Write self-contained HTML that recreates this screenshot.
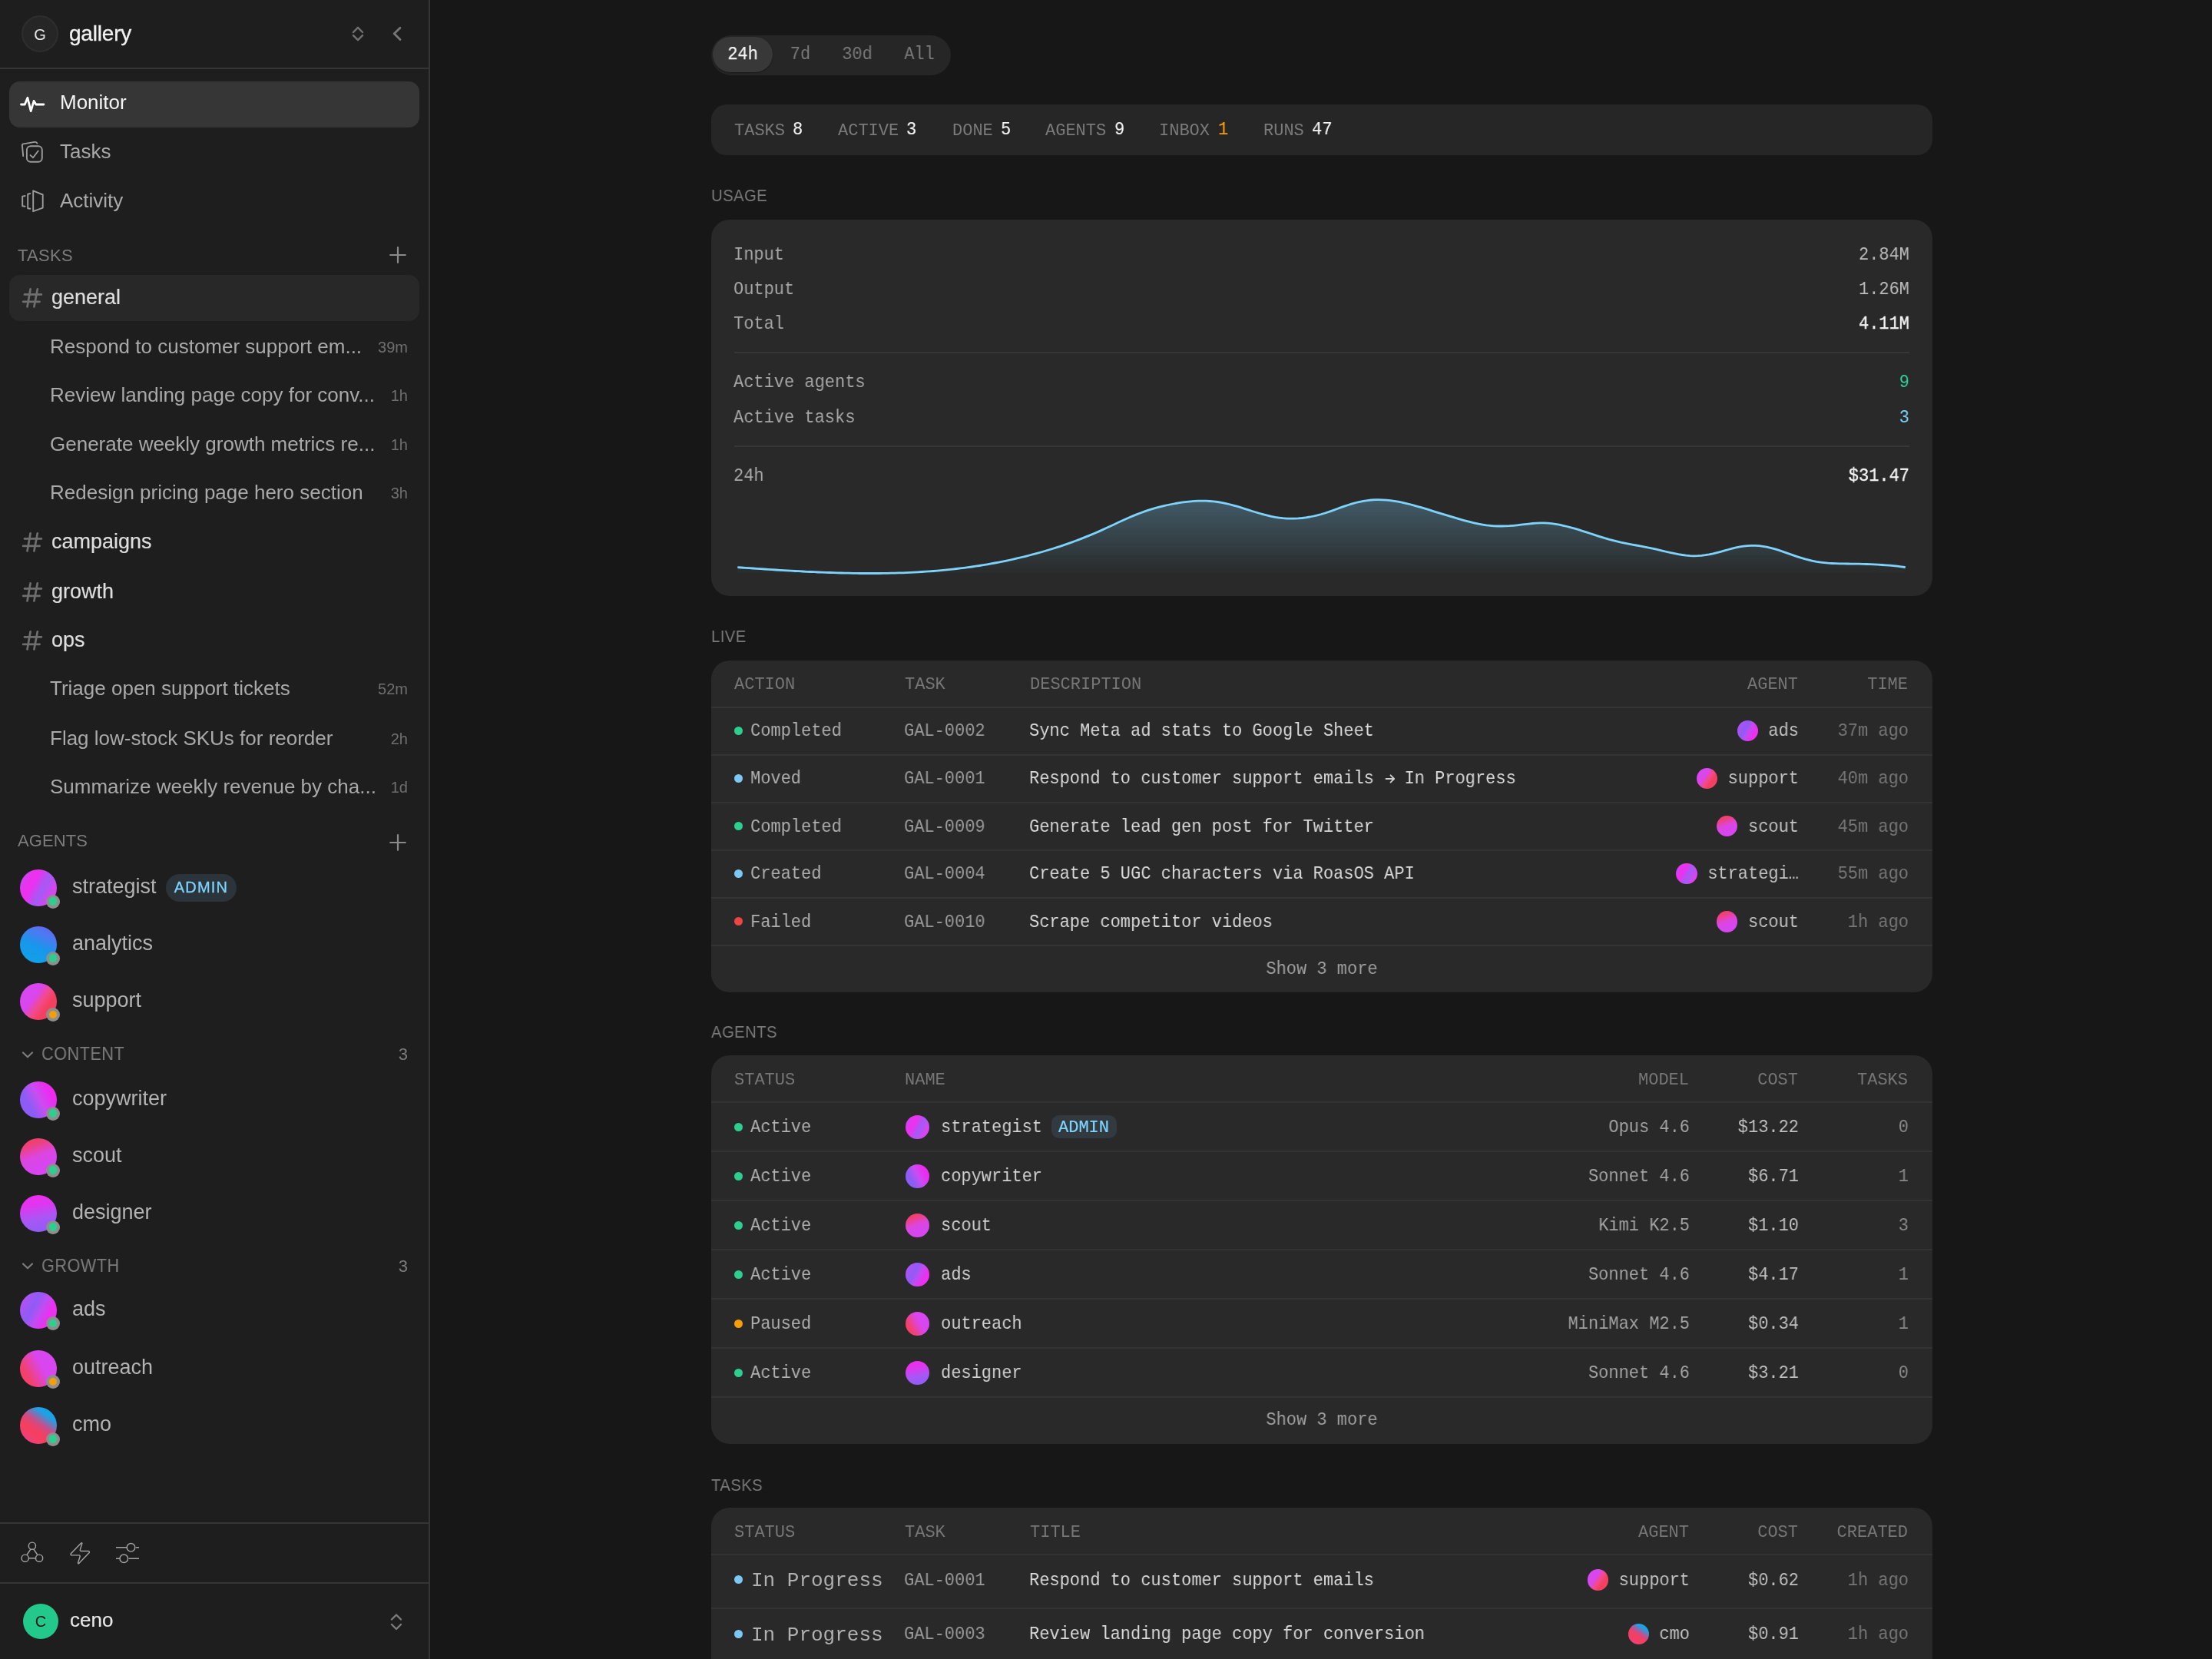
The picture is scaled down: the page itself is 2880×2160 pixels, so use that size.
<!DOCTYPE html><html><head><meta charset="utf-8"><title>Monitor</title><style>html,body{margin:0;padding:0;width:2880px;height:2160px;overflow:hidden;background:#171717}.t{position:absolute;line-height:40px;white-space:pre;will-change:transform}.b{position:absolute}</style></head><body>
<div class="b" style="left:0px;top:0px;width:558px;height:2160px;background:#1e1e1e;border-radius:0px;"></div>
<div class="b" style="left:558px;top:0px;width:2px;height:2160px;background:#353535;border-radius:0px;"></div>
<div class="b" style="left:0px;top:88px;width:558px;height:2px;background:#353535;border-radius:0px;"></div>
<div class="b" style="left:28px;top:20px;width:44px;height:44px;border-radius:50%;background:#262626;border:2px solid #2e2e2e"></div>
<div class="t" style="top:25px;font-family:'Liberation Sans', sans-serif;font-size:20px;color:#e6e6e6;left:-248px;width:600px;text-align:center;">G</div>
<div class="t" style="top:23.5px;font-family:'Liberation Sans', sans-serif;font-size:28px;color:#f2f2f2;left:90px;-webkit-text-stroke:0.3px #f2f2f2;letter-spacing:-0.2px;">gallery</div>
<svg class="b" style="left:452px;top:28px;" width="28" height="32" viewBox="0 0 28 32" fill="none"><path d="M8 14 L14 7.8 L20 14 M8 18.2 L14 24.2 L20 18.2" stroke="#707070" stroke-width="2.5" stroke-linecap="round" stroke-linejoin="round"/></svg>
<svg class="b" style="left:504px;top:28px;" width="28" height="32" viewBox="0 0 28 32" fill="none"><path d="M17 8.3 L9.2 15.7 L17 23.6" stroke="#777777" stroke-width="2.8" stroke-linecap="round" stroke-linejoin="round"/></svg>
<div class="b" style="left:12px;top:106px;width:534px;height:60px;background:#363636;border-radius:14px;"></div>
<svg class="b" style="left:20px;top:116px;" width="44" height="40" viewBox="0 0 44 40" fill="none"><path d="M7.5 20 L12.3 20 L15.9 11.3 L20.2 28.7 L24.1 15.4 L26.8 20 L36.9 20" stroke="#ffffff" stroke-width="2.8" stroke-linecap="round" stroke-linejoin="round"/></svg>
<div class="t" style="top:112.5px;font-family:'Liberation Sans', sans-serif;font-size:26px;color:#f4f4f4;left:78px;">Monitor</div>
<svg class="b" style="left:20px;top:176px;" width="44" height="44" viewBox="0 0 44 44" fill="none"><rect x="14.9" y="14.3" width="19.9" height="20.5" rx="5" stroke="#9c9c9c" stroke-width="1.9"/><path d="M19.5 26.1 L23.1 29.2 L29.7 20.5" stroke="#9c9c9c" stroke-width="1.9" stroke-linecap="round" stroke-linejoin="round"/><path d="M10.2 27.1 L8.9 13.5 Q8.7 11.7 10.5 11.4 L25 8.9 Q27.2 8.6 28.4 10.6" stroke="#9c9c9c" stroke-width="1.9" stroke-linecap="round" stroke-linejoin="round"/></svg>
<div class="t" style="top:177.3px;font-family:'Liberation Sans', sans-serif;font-size:26px;color:#a9a9a9;left:78px;">Tasks</div>
<svg class="b" style="left:20px;top:240px;" width="44" height="44" viewBox="0 0 44 44" fill="none"><path d="M12.6 15 L9.2 15.6 L9.2 28.2 L12.6 28.7" stroke="#9c9c9c" stroke-width="1.9" stroke-linecap="round" stroke-linejoin="round"/><path d="M19.3 12 L16.2 12.7 L16.2 31.2 L19.3 31.8" stroke="#9c9c9c" stroke-width="1.9" stroke-linecap="round" stroke-linejoin="round"/><path d="M23.2 8.3 L35.7 13.5 L35.7 30.6 L23.2 35.2 Z" stroke="#9c9c9c" stroke-width="1.9" stroke-linecap="round" stroke-linejoin="round"/></svg>
<div class="t" style="top:241.39999999999998px;font-family:'Liberation Sans', sans-serif;font-size:26px;color:#a9a9a9;left:78px;">Activity</div>
<div class="t" style="top:312.7px;font-family:'Liberation Sans', sans-serif;font-size:22px;color:#7c7c7c;letter-spacing:0.3px;left:23px;">TASKS</div>
<svg class="b" style="left:504px;top:318.3px;" width="28" height="28" viewBox="0 0 28 28" fill="none"><path d="M14 4.2 L14 23.8 M4.2 14 L23.8 14" stroke="#8a8a8a" stroke-width="2.2" stroke-linecap="round"/></svg>
<div class="b" style="left:12px;top:358px;width:534px;height:60px;background:#282828;border-radius:14px;"></div>
<svg class="b" style="left:28px;top:374.0px;" width="30" height="30" viewBox="0 0 30 30" fill="none"><path d="M11.6 2.4 L7.5 25.5 M20.8 2.4 L16.4 25.5 M4 9.4 L25.9 9.4 M2.1 18.8 L23.6 18.8" stroke="#6e6e6e" stroke-width="2.7" stroke-linecap="round"/></svg>
<div class="t" style="top:366.7px;font-family:'Liberation Sans', sans-serif;font-size:27px;color:#dedede;left:66.5px;-webkit-text-stroke:0.2px #dedede;">general</div>
<div class="t" style="top:431.0px;font-family:'Liberation Sans', sans-serif;font-size:26px;color:#a9a9a9;left:65px;">Respond to customer support em...</div>
<div class="t" style="top:432.0px;font-family:'Liberation Sans', sans-serif;font-size:20px;color:#6f6f6f;left:-169px;width:700px;text-align:right;">39m</div>
<div class="t" style="top:494.0px;font-family:'Liberation Sans', sans-serif;font-size:26px;color:#a9a9a9;left:65px;">Review landing page copy for conv...</div>
<div class="t" style="top:495.0px;font-family:'Liberation Sans', sans-serif;font-size:20px;color:#6f6f6f;left:-169px;width:700px;text-align:right;">1h</div>
<div class="t" style="top:557.5px;font-family:'Liberation Sans', sans-serif;font-size:26px;color:#a9a9a9;left:65px;">Generate weekly growth metrics re...</div>
<div class="t" style="top:558.5px;font-family:'Liberation Sans', sans-serif;font-size:20px;color:#6f6f6f;left:-169px;width:700px;text-align:right;">1h</div>
<div class="t" style="top:621.0px;font-family:'Liberation Sans', sans-serif;font-size:26px;color:#a9a9a9;left:65px;">Redesign pricing page hero section</div>
<div class="t" style="top:622.0px;font-family:'Liberation Sans', sans-serif;font-size:20px;color:#6f6f6f;left:-169px;width:700px;text-align:right;">3h</div>
<svg class="b" style="left:28px;top:692.0px;" width="30" height="30" viewBox="0 0 30 30" fill="none"><path d="M11.6 2.4 L7.5 25.5 M20.8 2.4 L16.4 25.5 M4 9.4 L25.9 9.4 M2.1 18.8 L23.6 18.8" stroke="#6e6e6e" stroke-width="2.7" stroke-linecap="round"/></svg>
<div class="t" style="top:685px;font-family:'Liberation Sans', sans-serif;font-size:27px;color:#dedede;left:66.5px;-webkit-text-stroke:0.2px #dedede;">campaigns</div>
<svg class="b" style="left:28px;top:756.5px;" width="30" height="30" viewBox="0 0 30 30" fill="none"><path d="M11.6 2.4 L7.5 25.5 M20.8 2.4 L16.4 25.5 M4 9.4 L25.9 9.4 M2.1 18.8 L23.6 18.8" stroke="#6e6e6e" stroke-width="2.7" stroke-linecap="round"/></svg>
<div class="t" style="top:749.5px;font-family:'Liberation Sans', sans-serif;font-size:27px;color:#dedede;left:66.5px;-webkit-text-stroke:0.2px #dedede;">growth</div>
<svg class="b" style="left:28px;top:820.0px;" width="30" height="30" viewBox="0 0 30 30" fill="none"><path d="M11.6 2.4 L7.5 25.5 M20.8 2.4 L16.4 25.5 M4 9.4 L25.9 9.4 M2.1 18.8 L23.6 18.8" stroke="#6e6e6e" stroke-width="2.7" stroke-linecap="round"/></svg>
<div class="t" style="top:813px;font-family:'Liberation Sans', sans-serif;font-size:27px;color:#dedede;left:66.5px;-webkit-text-stroke:0.2px #dedede;">ops</div>
<div class="t" style="top:876.0px;font-family:'Liberation Sans', sans-serif;font-size:26px;color:#a9a9a9;left:65px;">Triage open support tickets</div>
<div class="t" style="top:877.0px;font-family:'Liberation Sans', sans-serif;font-size:20px;color:#6f6f6f;left:-169px;width:700px;text-align:right;">52m</div>
<div class="t" style="top:940.5px;font-family:'Liberation Sans', sans-serif;font-size:26px;color:#a9a9a9;left:65px;">Flag low-stock SKUs for reorder</div>
<div class="t" style="top:941.5px;font-family:'Liberation Sans', sans-serif;font-size:20px;color:#6f6f6f;left:-169px;width:700px;text-align:right;">2h</div>
<div class="t" style="top:1004.0px;font-family:'Liberation Sans', sans-serif;font-size:26px;color:#a9a9a9;left:65px;">Summarize weekly revenue by cha...</div>
<div class="t" style="top:1005.0px;font-family:'Liberation Sans', sans-serif;font-size:20px;color:#6f6f6f;left:-169px;width:700px;text-align:right;">1d</div>
<div class="t" style="top:1075.2px;font-family:'Liberation Sans', sans-serif;font-size:22px;color:#7c7c7c;letter-spacing:0.1px;left:23px;">AGENTS</div>
<svg class="b" style="left:504px;top:1082.7px;" width="28" height="28" viewBox="0 0 28 28" fill="none"><path d="M14 4.2 L14 23.8 M4.2 14 L23.8 14" stroke="#8a8a8a" stroke-width="2.2" stroke-linecap="round"/></svg>
<div class="b" style="left:26.0px;top:1132.0px;width:48px;height:48px;border-radius:50%;background:linear-gradient(118deg,#b153f5 0%,#ee30f0 28%,#e833ef 38%,#a35bf6 58%,#d845ef 80%,#dc45ee 100%)"></div>
<div class="b" style="left:60px;top:1164.5px;width:18px;height:18px;border-radius:50%;background:#8e8e8e"></div>
<div class="b" style="left:63.75px;top:1168.25px;width:10.5px;height:10.5px;border-radius:50%;background:#2ccf8f"></div>
<div class="t" style="top:1134px;font-family:'Liberation Sans', sans-serif;font-size:27px;color:#b3b3b3;left:93.5px;">strategist</div>
<div class="b" style="left:216px;top:1138px;width:92px;height:36px;background:#2b343a;border-radius:18px;"></div>
<div class="t" style="top:1135.2px;font-family:'Liberation Sans', sans-serif;font-size:20px;color:#7dd3fc;letter-spacing:1.2px;left:-38px;width:600px;text-align:center;-webkit-text-stroke:0.3px #7dd3fc;">ADMIN</div>
<div class="b" style="left:26.0px;top:1206.0px;width:48px;height:48px;border-radius:50%;background:linear-gradient(205deg,#6a5cf5 0%,#4f78f2 25%,#1897ec 55%,#0ea5e6 100%)"></div>
<div class="b" style="left:60px;top:1238.5px;width:18px;height:18px;border-radius:50%;background:#8e8e8e"></div>
<div class="b" style="left:63.75px;top:1242.25px;width:10.5px;height:10.5px;border-radius:50%;background:#2ccf8f"></div>
<div class="t" style="top:1208px;font-family:'Liberation Sans', sans-serif;font-size:27px;color:#b3b3b3;left:93.5px;">analytics</div>
<div class="b" style="left:26.0px;top:1279.5px;width:48px;height:48px;border-radius:50%;background:linear-gradient(125deg,#d948ee 0%,#d946ef 38%,#f24a8a 55%,#f43f5e 70%,#f0436e 100%)"></div>
<div class="b" style="left:60px;top:1312.0px;width:18px;height:18px;border-radius:50%;background:#8e8e8e"></div>
<div class="b" style="left:63.75px;top:1315.75px;width:10.5px;height:10.5px;border-radius:50%;background:#f59e0b"></div>
<div class="t" style="top:1281.5px;font-family:'Liberation Sans', sans-serif;font-size:27px;color:#b3b3b3;left:93.5px;">support</div>
<svg class="b" style="left:24px;top:1363.5px;" width="24" height="20" viewBox="0 0 24 20" fill="none"><path d="M6 6.5 L12 12.3 L18 6.5" stroke="#7c7c7c" stroke-width="2.2" stroke-linecap="round" stroke-linejoin="round"/></svg>
<div class="t" style="top:1352.0px;font-family:'Liberation Sans', sans-serif;font-size:24px;color:#7c7c7c;letter-spacing:0.6px;left:54px;transform:scaleX(0.9);transform-origin:0 0;">CONTENT</div>
<div class="t" style="top:1353.0px;font-family:'Liberation Sans', sans-serif;font-size:22px;color:#7c7c7c;left:-169.5px;width:700px;text-align:right;">3</div>
<div class="b" style="left:26.0px;top:1408.0px;width:48px;height:48px;border-radius:50%;background:linear-gradient(62deg,#8b5cf6 0%,#8d5cf6 30%,#c94df2 52%,#ee2af0 78%,#f02cf0 100%)"></div>
<div class="b" style="left:60px;top:1440.5px;width:18px;height:18px;border-radius:50%;background:#8e8e8e"></div>
<div class="b" style="left:63.75px;top:1444.25px;width:10.5px;height:10.5px;border-radius:50%;background:#2ccf8f"></div>
<div class="t" style="top:1410px;font-family:'Liberation Sans', sans-serif;font-size:27px;color:#b3b3b3;left:93.5px;">copywriter</div>
<div class="b" style="left:26.0px;top:1482.0px;width:48px;height:48px;border-radius:50%;background:linear-gradient(160deg,#f4405e 0%,#f04075 20%,#dc46e0 48%,#d646ef 70%,#dc45ee 100%)"></div>
<div class="b" style="left:60px;top:1514.5px;width:18px;height:18px;border-radius:50%;background:#8e8e8e"></div>
<div class="b" style="left:63.75px;top:1518.25px;width:10.5px;height:10.5px;border-radius:50%;background:#2ccf8f"></div>
<div class="t" style="top:1484px;font-family:'Liberation Sans', sans-serif;font-size:27px;color:#b3b3b3;left:93.5px;">scout</div>
<div class="b" style="left:26.0px;top:1556.0px;width:48px;height:48px;border-radius:50%;background:linear-gradient(168deg,#f22af0 0%,#e036f0 30%,#a857f5 62%,#8b5cf6 100%)"></div>
<div class="b" style="left:60px;top:1588.5px;width:18px;height:18px;border-radius:50%;background:#8e8e8e"></div>
<div class="b" style="left:63.75px;top:1592.25px;width:10.5px;height:10.5px;border-radius:50%;background:#2ccf8f"></div>
<div class="t" style="top:1558px;font-family:'Liberation Sans', sans-serif;font-size:27px;color:#b3b3b3;left:93.5px;">designer</div>
<svg class="b" style="left:24px;top:1639px;" width="24" height="20" viewBox="0 0 24 20" fill="none"><path d="M6 6.5 L12 12.3 L18 6.5" stroke="#7c7c7c" stroke-width="2.2" stroke-linecap="round" stroke-linejoin="round"/></svg>
<div class="t" style="top:1627.5px;font-family:'Liberation Sans', sans-serif;font-size:24px;color:#7c7c7c;letter-spacing:0.6px;left:54px;transform:scaleX(0.9);transform-origin:0 0;">GROWTH</div>
<div class="t" style="top:1628.5px;font-family:'Liberation Sans', sans-serif;font-size:22px;color:#7c7c7c;left:-169.5px;width:700px;text-align:right;">3</div>
<div class="b" style="left:26.0px;top:1681.5px;width:48px;height:48px;border-radius:50%;background:linear-gradient(118deg,#c54bf3 0%,#8f5bf6 38%,#c14cf2 55%,#ee2ef0 75%,#e83af0 100%)"></div>
<div class="b" style="left:60px;top:1714.0px;width:18px;height:18px;border-radius:50%;background:#8e8e8e"></div>
<div class="b" style="left:63.75px;top:1717.75px;width:10.5px;height:10.5px;border-radius:50%;background:#2ccf8f"></div>
<div class="t" style="top:1683.5px;font-family:'Liberation Sans', sans-serif;font-size:27px;color:#b3b3b3;left:93.5px;">ads</div>
<div class="b" style="left:26.0px;top:1757.5px;width:48px;height:48px;border-radius:50%;background:linear-gradient(62deg,#f43f5e 0%,#f24170 25%,#d946ef 58%,#d646ef 100%)"></div>
<div class="b" style="left:60px;top:1790.0px;width:18px;height:18px;border-radius:50%;background:#8e8e8e"></div>
<div class="b" style="left:63.75px;top:1793.75px;width:10.5px;height:10.5px;border-radius:50%;background:#f59e0b"></div>
<div class="t" style="top:1759.5px;font-family:'Liberation Sans', sans-serif;font-size:27px;color:#b3b3b3;left:93.5px;">outreach</div>
<div class="b" style="left:26.0px;top:1832.0px;width:48px;height:48px;border-radius:50%;background:linear-gradient(215deg,#12a5e8 0%,#1ca2e6 24%,#d04a86 46%,#f43f5e 62%,#f43f6a 78%,#ea3ac0 100%)"></div>
<div class="b" style="left:60px;top:1864.5px;width:18px;height:18px;border-radius:50%;background:#8e8e8e"></div>
<div class="b" style="left:63.75px;top:1868.25px;width:10.5px;height:10.5px;border-radius:50%;background:#2ccf8f"></div>
<div class="t" style="top:1834px;font-family:'Liberation Sans', sans-serif;font-size:27px;color:#b3b3b3;left:93.5px;">cmo</div>
<div class="b" style="left:0px;top:1982px;width:558px;height:2px;background:#353535;border-radius:0px;"></div>
<svg class="b" style="left:24px;top:2000px;" width="36" height="40" viewBox="0 0 36 40" fill="none"><circle cx="17.9" cy="12.7" r="4.6" stroke="#a3a3a3" stroke-width="1.45"/><circle cx="8.7" cy="28.7" r="4.6" stroke="#a3a3a3" stroke-width="1.45"/><circle cx="27.1" cy="28.7" r="4.6" stroke="#a3a3a3" stroke-width="1.45"/><path d="M16 17 L10.8 24.6 M19.8 17 L25 24.6 M13.3 28.7 L22.5 28.7" stroke="#a3a3a3" stroke-width="1.45"/></svg>
<svg class="b" style="left:87.8px;top:2005.8px;" width="32.4" height="32.4" viewBox="0 0 24 24" fill="none"><path d="M4 14a1 1 0 0 1-.78-1.63l9.9-10.2a.5.5 0 0 1 .86.46l-1.92 6.02A1 1 0 0 0 13 10h7a1 1 0 0 1 .78 1.63l-9.9 10.2a.5.5 0 0 1-.86-.46l1.92-6.02A1 1 0 0 0 11 14z" stroke="#a3a3a3" stroke-width="1.05" stroke-linejoin="round"/></svg>
<svg class="b" style="left:146px;top:2000px;" width="40" height="40" viewBox="0 0 40 40" fill="none"><path d="M5 14.8 L19.6 14.8 M30.9 14.8 L35 14.8 M5 29.2 L10.4 29.2 M21.7 29.2 L35 29.2" stroke="#a3a3a3" stroke-width="1.45"/><circle cx="24.5" cy="14.8" r="5.3" stroke="#a3a3a3" stroke-width="1.45"/><circle cx="15.3" cy="29.2" r="5.3" stroke="#a3a3a3" stroke-width="1.45"/></svg>
<div class="b" style="left:0px;top:2060px;width:558px;height:2px;background:#353535;border-radius:0px;"></div>
<div class="b" style="left:30.0px;top:2088.0px;width:46px;height:46px;border-radius:50%;background:#22c98a"></div>
<div class="t" style="top:2091px;font-family:'Liberation Sans', sans-serif;font-size:20px;color:#111111;left:-247px;width:600px;text-align:center;">C</div>
<div class="t" style="top:2089px;font-family:'Liberation Sans', sans-serif;font-size:26px;color:#e8e8e8;left:90.5px;-webkit-text-stroke:0.15px #e8e8e8;">ceno</div>
<svg class="b" style="left:502px;top:2096px;" width="28" height="32" viewBox="0 0 28 32" fill="none"><path d="M8 12.5 L14 6.5 L20 12.5 M8 19 L14 25 L20 19" stroke="#7c7c7c" stroke-width="2.4" stroke-linecap="round" stroke-linejoin="round"/></svg>
<div class="b" style="left:926px;top:46px;width:312px;height:52px;background:#262626;border-radius:26px;"></div>
<div class="b" style="left:928px;top:48px;width:78px;height:46px;background:#383838;border-radius:23px;box-shadow:0 1px 2px rgba(0,0,0,.35);"></div>
<div class="t" style="top:51.2px;font-family:'Liberation Mono', monospace;font-size:24px;color:#f5f5f5;left:667px;width:600px;text-align:center;transform:scaleX(0.9167);transform-origin:center 0;-webkit-text-stroke:0.25px #f5f5f5;">24h</div>
<div class="t" style="top:51.2px;font-family:'Liberation Mono', monospace;font-size:24px;color:#7a7a7a;left:741.5px;width:600px;text-align:center;transform:scaleX(0.9167);transform-origin:center 0;">7d</div>
<div class="t" style="top:51.2px;font-family:'Liberation Mono', monospace;font-size:24px;color:#7a7a7a;left:816px;width:600px;text-align:center;transform:scaleX(0.9167);transform-origin:center 0;">30d</div>
<div class="t" style="top:51.2px;font-family:'Liberation Mono', monospace;font-size:24px;color:#7a7a7a;left:896.5px;width:600px;text-align:center;transform:scaleX(0.9167);transform-origin:center 0;">All</div>
<div class="b" style="left:926px;top:136px;width:1590px;height:66px;background:#262626;border-radius:20px;"></div>
<div class="t" style="top:151.2px;font-family:'Liberation Mono', monospace;font-size:22px;color:#7a7a7a;left:955.5px;">TASKS</div>
<div class="t" style="top:149.39999999999998px;font-family:'Liberation Mono', monospace;font-size:24px;color:#f5f5f5;left:1031.7px;transform:scaleX(0.9167);transform-origin:left 0;-webkit-text-stroke:0.15px #f5f5f5;">8</div>
<div class="t" style="top:151.2px;font-family:'Liberation Mono', monospace;font-size:22px;color:#7a7a7a;left:1090.8px;">ACTIVE</div>
<div class="t" style="top:149.39999999999998px;font-family:'Liberation Mono', monospace;font-size:24px;color:#f5f5f5;left:1180.2px;transform:scaleX(0.9167);transform-origin:left 0;-webkit-text-stroke:0.15px #f5f5f5;">3</div>
<div class="t" style="top:151.2px;font-family:'Liberation Mono', monospace;font-size:22px;color:#7a7a7a;left:1239.6px;">DONE</div>
<div class="t" style="top:149.39999999999998px;font-family:'Liberation Mono', monospace;font-size:24px;color:#f5f5f5;left:1302.6px;transform:scaleX(0.9167);transform-origin:left 0;-webkit-text-stroke:0.15px #f5f5f5;">5</div>
<div class="t" style="top:151.2px;font-family:'Liberation Mono', monospace;font-size:22px;color:#7a7a7a;left:1361.3px;">AGENTS</div>
<div class="t" style="top:149.39999999999998px;font-family:'Liberation Mono', monospace;font-size:24px;color:#f5f5f5;left:1450.7px;transform:scaleX(0.9167);transform-origin:left 0;-webkit-text-stroke:0.15px #f5f5f5;">9</div>
<div class="t" style="top:151.2px;font-family:'Liberation Mono', monospace;font-size:22px;color:#7a7a7a;left:1509.3px;">INBOX</div>
<div class="t" style="top:149.39999999999998px;font-family:'Liberation Mono', monospace;font-size:24px;color:#f59e0b;left:1585.5px;transform:scaleX(0.9167);transform-origin:left 0;-webkit-text-stroke:0.15px #f59e0b;">1</div>
<div class="t" style="top:151.2px;font-family:'Liberation Mono', monospace;font-size:22px;color:#7a7a7a;left:1645.1px;">RUNS</div>
<div class="t" style="top:149.39999999999998px;font-family:'Liberation Mono', monospace;font-size:24px;color:#f5f5f5;left:1708.1px;transform:scaleX(0.9167);transform-origin:left 0;-webkit-text-stroke:0.15px #f5f5f5;">47</div>
<div class="t" style="top:235px;font-family:'Liberation Sans', sans-serif;font-size:22px;color:#7a7a7a;letter-spacing:0.5px;left:926px;transform:scaleX(0.92);transform-origin:0 0;">USAGE</div>
<div class="b" style="left:926px;top:286px;width:1590px;height:490px;background:#292929;border-radius:24px;"></div>
<div class="t" style="top:311.9px;font-family:'Liberation Mono', monospace;font-size:24px;color:#a8a8a8;left:955px;transform:scaleX(0.9167);transform-origin:left 0;">Input</div>
<div class="t" style="top:311.9px;font-family:'Liberation Mono', monospace;font-size:24px;color:#bdbdbd;left:1786px;width:700px;text-align:right;transform:scaleX(0.9167);transform-origin:right 0;">2.84M</div>
<div class="t" style="top:356.7px;font-family:'Liberation Mono', monospace;font-size:24px;color:#a8a8a8;left:955px;transform:scaleX(0.9167);transform-origin:left 0;">Output</div>
<div class="t" style="top:356.7px;font-family:'Liberation Mono', monospace;font-size:24px;color:#bdbdbd;left:1786px;width:700px;text-align:right;transform:scaleX(0.9167);transform-origin:right 0;">1.26M</div>
<div class="t" style="top:401.59999999999997px;font-family:'Liberation Mono', monospace;font-size:24px;color:#a8a8a8;left:955px;transform:scaleX(0.9167);transform-origin:left 0;">Total</div>
<div class="t" style="top:401.59999999999997px;font-family:'Liberation Mono', monospace;font-size:24px;color:#f5f5f5;left:1786px;width:700px;text-align:right;transform:scaleX(0.9167);transform-origin:right 0;-webkit-text-stroke:0.35px #f5f5f5;">4.11M</div>
<div class="b" style="left:956px;top:457.5px;width:1530px;height:2px;background:#363636;border-radius:0px;"></div>
<div class="t" style="top:478.2px;font-family:'Liberation Mono', monospace;font-size:24px;color:#a8a8a8;left:955px;transform:scaleX(0.9167);transform-origin:left 0;">Active agents</div>
<div class="t" style="top:478.2px;font-family:'Liberation Mono', monospace;font-size:24px;color:#34d399;left:1786px;width:700px;text-align:right;transform:scaleX(0.9167);transform-origin:right 0;">9</div>
<div class="t" style="top:524.2px;font-family:'Liberation Mono', monospace;font-size:24px;color:#a8a8a8;left:955px;transform:scaleX(0.9167);transform-origin:left 0;">Active tasks</div>
<div class="t" style="top:524.2px;font-family:'Liberation Mono', monospace;font-size:24px;color:#7dd3fc;left:1786px;width:700px;text-align:right;transform:scaleX(0.9167);transform-origin:right 0;">3</div>
<div class="b" style="left:956px;top:579.5px;width:1530px;height:2px;background:#363636;border-radius:0px;"></div>
<div class="t" style="top:599.7px;font-family:'Liberation Mono', monospace;font-size:24px;color:#a8a8a8;left:955px;transform:scaleX(0.9167);transform-origin:left 0;">24h</div>
<div class="t" style="top:600.2px;font-family:'Liberation Mono', monospace;font-size:24px;color:#f5f5f5;left:1786px;width:700px;text-align:right;transform:scaleX(0.9167);transform-origin:right 0;-webkit-text-stroke:0.35px #f5f5f5;">$31.47</div>
<svg class="b" style="left:0px;top:0px;" width="2880" height="800" viewBox="0 0 2880 800" fill="none"><defs><linearGradient id="ag" x1="0" y1="648" x2="0" y2="750" gradientUnits="userSpaceOnUse"><stop offset="0" stop-color="#7dd3fc" stop-opacity="0.30"/><stop offset="0.55" stop-color="#7dd3fc" stop-opacity="0.14"/><stop offset="1" stop-color="#7dd3fc" stop-opacity="0"/></linearGradient></defs><path d="M960.3 738.7 L965.3 739.0 L970.3 739.4 L975.3 739.7 L980.3 740.0 L985.3 740.4 L990.3 740.7 L995.3 741.0 L1000.3 741.4 L1005.3 741.7 L1010.3 742.0 L1015.3 742.3 L1020.3 742.6 L1025.3 742.9 L1030.3 743.2 L1035.3 743.5 L1040.3 743.7 L1045.3 744.0 L1050.3 744.3 L1055.3 744.5 L1060.3 744.7 L1065.3 745.0 L1070.3 745.2 L1075.3 745.4 L1080.3 745.5 L1085.3 745.7 L1090.3 745.9 L1095.3 746.0 L1100.3 746.1 L1105.3 746.2 L1110.3 746.3 L1115.3 746.4 L1120.3 746.5 L1125.3 746.5 L1130.3 746.5 L1135.3 746.5 L1140.3 746.5 L1145.3 746.5 L1150.3 746.4 L1155.3 746.3 L1160.3 746.2 L1165.3 746.1 L1170.3 745.9 L1175.3 745.8 L1180.3 745.6 L1185.3 745.4 L1190.3 745.1 L1195.3 744.8 L1200.3 744.5 L1205.3 744.2 L1210.3 743.9 L1215.3 743.5 L1220.3 743.1 L1225.3 742.6 L1230.3 742.1 L1235.3 741.6 L1240.3 741.1 L1245.3 740.5 L1250.3 739.9 L1255.3 739.3 L1260.3 738.7 L1265.3 738.0 L1270.3 737.2 L1275.3 736.5 L1280.3 735.7 L1285.3 734.8 L1290.3 733.9 L1295.3 733.0 L1300.3 732.1 L1305.3 731.1 L1310.3 730.1 L1315.3 729.0 L1320.3 727.9 L1325.3 726.7 L1330.3 725.5 L1335.3 724.3 L1340.3 723.0 L1345.3 721.7 L1350.3 720.4 L1355.3 719.0 L1360.3 717.5 L1365.3 716.0 L1370.3 714.5 L1375.3 712.9 L1380.3 711.3 L1385.3 709.6 L1390.3 707.9 L1395.3 706.1 L1400.3 704.2 L1405.3 702.4 L1410.3 700.4 L1415.3 698.4 L1420.3 696.4 L1425.3 694.3 L1430.3 692.1 L1435.3 689.9 L1440.3 687.6 L1445.3 685.3 L1450.3 682.9 L1455.3 680.6 L1460.3 678.3 L1465.3 676.0 L1470.3 673.8 L1475.3 671.6 L1480.3 669.6 L1485.3 667.7 L1490.3 665.9 L1495.3 664.2 L1500.3 662.7 L1505.3 661.2 L1510.3 659.9 L1515.3 658.7 L1520.3 657.5 L1525.3 656.5 L1530.3 655.5 L1535.3 654.7 L1540.3 653.9 L1545.3 653.3 L1550.3 652.8 L1555.3 652.4 L1560.3 652.2 L1565.3 652.1 L1570.3 652.2 L1575.3 652.5 L1580.3 652.9 L1585.3 653.5 L1590.3 654.3 L1595.3 655.3 L1600.3 656.5 L1605.3 657.8 L1610.3 659.2 L1615.3 660.7 L1620.3 662.3 L1625.3 663.9 L1630.3 665.5 L1635.3 667.0 L1640.3 668.5 L1645.3 669.9 L1650.3 671.2 L1655.3 672.4 L1660.3 673.4 L1665.3 674.1 L1670.3 674.7 L1675.3 675.1 L1680.3 675.2 L1685.3 675.1 L1690.3 674.9 L1695.3 674.5 L1700.3 673.8 L1705.3 673.0 L1710.3 672.0 L1715.3 670.8 L1720.3 669.5 L1725.3 668.0 L1730.3 666.3 L1735.3 664.6 L1740.3 662.8 L1745.3 660.9 L1750.3 659.2 L1755.3 657.5 L1760.3 655.9 L1765.3 654.5 L1770.3 653.3 L1775.3 652.3 L1780.3 651.6 L1785.3 651.0 L1790.3 650.7 L1795.3 650.6 L1800.3 650.8 L1805.3 651.1 L1810.3 651.6 L1815.3 652.3 L1820.3 653.2 L1825.3 654.2 L1830.3 655.3 L1835.3 656.5 L1840.3 657.9 L1845.3 659.3 L1850.3 660.7 L1855.3 662.2 L1860.3 663.7 L1865.3 665.3 L1870.3 666.8 L1875.3 668.4 L1880.3 669.9 L1885.3 671.4 L1890.3 672.9 L1895.3 674.4 L1900.3 675.9 L1905.3 677.3 L1910.3 678.6 L1915.3 679.9 L1920.3 681.1 L1925.3 682.2 L1930.3 683.1 L1935.3 683.9 L1940.3 684.4 L1945.3 684.8 L1950.3 685.0 L1955.3 685.0 L1960.3 684.9 L1965.3 684.7 L1970.3 684.3 L1975.3 683.8 L1980.3 683.2 L1985.3 682.6 L1990.3 682.1 L1995.3 681.5 L2000.3 681.2 L2005.3 680.9 L2010.3 680.9 L2015.3 681.2 L2020.3 681.7 L2025.3 682.4 L2030.3 683.2 L2035.3 684.3 L2040.3 685.5 L2045.3 686.8 L2050.3 688.2 L2055.3 689.7 L2060.3 691.3 L2065.3 692.9 L2070.3 694.5 L2075.3 696.2 L2080.3 697.8 L2085.3 699.4 L2090.3 700.9 L2095.3 702.4 L2100.3 703.7 L2105.3 704.9 L2110.3 706.1 L2115.3 707.1 L2120.3 708.1 L2125.3 709.1 L2130.3 710.0 L2135.3 710.9 L2140.3 711.8 L2145.3 712.8 L2150.3 713.8 L2155.3 714.9 L2160.3 716.1 L2165.3 717.3 L2170.3 718.5 L2175.3 719.6 L2180.3 720.7 L2185.3 721.7 L2190.3 722.5 L2195.3 723.2 L2200.3 723.6 L2205.3 723.8 L2210.3 723.7 L2215.3 723.3 L2220.3 722.7 L2225.3 721.9 L2230.3 720.9 L2235.3 719.6 L2240.3 718.3 L2245.3 716.9 L2250.3 715.5 L2255.3 714.1 L2260.3 712.9 L2265.3 711.9 L2270.3 711.2 L2275.3 710.7 L2280.3 710.4 L2285.3 710.4 L2290.3 710.7 L2295.3 711.3 L2300.3 712.1 L2305.3 713.3 L2310.3 714.6 L2315.3 716.2 L2320.3 717.9 L2325.3 719.6 L2330.3 721.4 L2335.3 723.1 L2340.3 724.8 L2345.3 726.4 L2350.3 727.9 L2355.3 729.2 L2360.3 730.4 L2365.3 731.4 L2370.3 732.1 L2375.3 732.7 L2380.3 733.2 L2385.3 733.5 L2390.3 733.7 L2395.3 733.8 L2400.3 733.9 L2405.3 734.0 L2410.3 734.1 L2415.3 734.1 L2420.3 734.2 L2425.3 734.4 L2430.3 734.5 L2435.3 734.7 L2440.3 734.9 L2445.3 735.2 L2450.3 735.5 L2455.3 735.8 L2460.3 736.2 L2465.3 736.7 L2470.3 737.2 L2475.3 737.8 L2480.3 738.5 L2480.8 738.5 L2480.8 750 L960.3 750 Z" fill="url(#ag)"/><path d="M960.3 738.7 L965.3 739.0 L970.3 739.4 L975.3 739.7 L980.3 740.0 L985.3 740.4 L990.3 740.7 L995.3 741.0 L1000.3 741.4 L1005.3 741.7 L1010.3 742.0 L1015.3 742.3 L1020.3 742.6 L1025.3 742.9 L1030.3 743.2 L1035.3 743.5 L1040.3 743.7 L1045.3 744.0 L1050.3 744.3 L1055.3 744.5 L1060.3 744.7 L1065.3 745.0 L1070.3 745.2 L1075.3 745.4 L1080.3 745.5 L1085.3 745.7 L1090.3 745.9 L1095.3 746.0 L1100.3 746.1 L1105.3 746.2 L1110.3 746.3 L1115.3 746.4 L1120.3 746.5 L1125.3 746.5 L1130.3 746.5 L1135.3 746.5 L1140.3 746.5 L1145.3 746.5 L1150.3 746.4 L1155.3 746.3 L1160.3 746.2 L1165.3 746.1 L1170.3 745.9 L1175.3 745.8 L1180.3 745.6 L1185.3 745.4 L1190.3 745.1 L1195.3 744.8 L1200.3 744.5 L1205.3 744.2 L1210.3 743.9 L1215.3 743.5 L1220.3 743.1 L1225.3 742.6 L1230.3 742.1 L1235.3 741.6 L1240.3 741.1 L1245.3 740.5 L1250.3 739.9 L1255.3 739.3 L1260.3 738.7 L1265.3 738.0 L1270.3 737.2 L1275.3 736.5 L1280.3 735.7 L1285.3 734.8 L1290.3 733.9 L1295.3 733.0 L1300.3 732.1 L1305.3 731.1 L1310.3 730.1 L1315.3 729.0 L1320.3 727.9 L1325.3 726.7 L1330.3 725.5 L1335.3 724.3 L1340.3 723.0 L1345.3 721.7 L1350.3 720.4 L1355.3 719.0 L1360.3 717.5 L1365.3 716.0 L1370.3 714.5 L1375.3 712.9 L1380.3 711.3 L1385.3 709.6 L1390.3 707.9 L1395.3 706.1 L1400.3 704.2 L1405.3 702.4 L1410.3 700.4 L1415.3 698.4 L1420.3 696.4 L1425.3 694.3 L1430.3 692.1 L1435.3 689.9 L1440.3 687.6 L1445.3 685.3 L1450.3 682.9 L1455.3 680.6 L1460.3 678.3 L1465.3 676.0 L1470.3 673.8 L1475.3 671.6 L1480.3 669.6 L1485.3 667.7 L1490.3 665.9 L1495.3 664.2 L1500.3 662.7 L1505.3 661.2 L1510.3 659.9 L1515.3 658.7 L1520.3 657.5 L1525.3 656.5 L1530.3 655.5 L1535.3 654.7 L1540.3 653.9 L1545.3 653.3 L1550.3 652.8 L1555.3 652.4 L1560.3 652.2 L1565.3 652.1 L1570.3 652.2 L1575.3 652.5 L1580.3 652.9 L1585.3 653.5 L1590.3 654.3 L1595.3 655.3 L1600.3 656.5 L1605.3 657.8 L1610.3 659.2 L1615.3 660.7 L1620.3 662.3 L1625.3 663.9 L1630.3 665.5 L1635.3 667.0 L1640.3 668.5 L1645.3 669.9 L1650.3 671.2 L1655.3 672.4 L1660.3 673.4 L1665.3 674.1 L1670.3 674.7 L1675.3 675.1 L1680.3 675.2 L1685.3 675.1 L1690.3 674.9 L1695.3 674.5 L1700.3 673.8 L1705.3 673.0 L1710.3 672.0 L1715.3 670.8 L1720.3 669.5 L1725.3 668.0 L1730.3 666.3 L1735.3 664.6 L1740.3 662.8 L1745.3 660.9 L1750.3 659.2 L1755.3 657.5 L1760.3 655.9 L1765.3 654.5 L1770.3 653.3 L1775.3 652.3 L1780.3 651.6 L1785.3 651.0 L1790.3 650.7 L1795.3 650.6 L1800.3 650.8 L1805.3 651.1 L1810.3 651.6 L1815.3 652.3 L1820.3 653.2 L1825.3 654.2 L1830.3 655.3 L1835.3 656.5 L1840.3 657.9 L1845.3 659.3 L1850.3 660.7 L1855.3 662.2 L1860.3 663.7 L1865.3 665.3 L1870.3 666.8 L1875.3 668.4 L1880.3 669.9 L1885.3 671.4 L1890.3 672.9 L1895.3 674.4 L1900.3 675.9 L1905.3 677.3 L1910.3 678.6 L1915.3 679.9 L1920.3 681.1 L1925.3 682.2 L1930.3 683.1 L1935.3 683.9 L1940.3 684.4 L1945.3 684.8 L1950.3 685.0 L1955.3 685.0 L1960.3 684.9 L1965.3 684.7 L1970.3 684.3 L1975.3 683.8 L1980.3 683.2 L1985.3 682.6 L1990.3 682.1 L1995.3 681.5 L2000.3 681.2 L2005.3 680.9 L2010.3 680.9 L2015.3 681.2 L2020.3 681.7 L2025.3 682.4 L2030.3 683.2 L2035.3 684.3 L2040.3 685.5 L2045.3 686.8 L2050.3 688.2 L2055.3 689.7 L2060.3 691.3 L2065.3 692.9 L2070.3 694.5 L2075.3 696.2 L2080.3 697.8 L2085.3 699.4 L2090.3 700.9 L2095.3 702.4 L2100.3 703.7 L2105.3 704.9 L2110.3 706.1 L2115.3 707.1 L2120.3 708.1 L2125.3 709.1 L2130.3 710.0 L2135.3 710.9 L2140.3 711.8 L2145.3 712.8 L2150.3 713.8 L2155.3 714.9 L2160.3 716.1 L2165.3 717.3 L2170.3 718.5 L2175.3 719.6 L2180.3 720.7 L2185.3 721.7 L2190.3 722.5 L2195.3 723.2 L2200.3 723.6 L2205.3 723.8 L2210.3 723.7 L2215.3 723.3 L2220.3 722.7 L2225.3 721.9 L2230.3 720.9 L2235.3 719.6 L2240.3 718.3 L2245.3 716.9 L2250.3 715.5 L2255.3 714.1 L2260.3 712.9 L2265.3 711.9 L2270.3 711.2 L2275.3 710.7 L2280.3 710.4 L2285.3 710.4 L2290.3 710.7 L2295.3 711.3 L2300.3 712.1 L2305.3 713.3 L2310.3 714.6 L2315.3 716.2 L2320.3 717.9 L2325.3 719.6 L2330.3 721.4 L2335.3 723.1 L2340.3 724.8 L2345.3 726.4 L2350.3 727.9 L2355.3 729.2 L2360.3 730.4 L2365.3 731.4 L2370.3 732.1 L2375.3 732.7 L2380.3 733.2 L2385.3 733.5 L2390.3 733.7 L2395.3 733.8 L2400.3 733.9 L2405.3 734.0 L2410.3 734.1 L2415.3 734.1 L2420.3 734.2 L2425.3 734.4 L2430.3 734.5 L2435.3 734.7 L2440.3 734.9 L2445.3 735.2 L2450.3 735.5 L2455.3 735.8 L2460.3 736.2 L2465.3 736.7 L2470.3 737.2 L2475.3 737.8 L2480.3 738.5 L2480.8 738.5" stroke="#7dd3fc" stroke-width="2.8" fill="none" stroke-linecap="butt" stroke-linejoin="round"/></svg>
<div class="t" style="top:809.2px;font-family:'Liberation Sans', sans-serif;font-size:22px;color:#7a7a7a;letter-spacing:0.5px;left:926px;transform:scaleX(0.92);transform-origin:0 0;">LIVE</div>
<div class="b" style="left:926px;top:860px;width:1590px;height:432px;background:#292929;border-radius:24px;"></div>
<div class="t" style="top:872px;font-family:'Liberation Mono', monospace;font-size:22px;color:#767676;left:956px;">ACTION</div>
<div class="t" style="top:872px;font-family:'Liberation Mono', monospace;font-size:22px;color:#767676;left:1178px;">TASK</div>
<div class="t" style="top:872px;font-family:'Liberation Mono', monospace;font-size:22px;color:#767676;left:1340.5px;">DESCRIPTION</div>
<div class="t" style="top:872px;font-family:'Liberation Mono', monospace;font-size:22px;color:#767676;left:1641px;width:700px;text-align:right;">AGENT</div>
<div class="t" style="top:872px;font-family:'Liberation Mono', monospace;font-size:22px;color:#767676;left:1784px;width:700px;text-align:right;">TIME</div>
<div class="b" style="left:926px;top:919.5px;width:1590px;height:2px;background:#333333;border-radius:0px;"></div>
<div class="b" style="left:926px;top:981.6px;width:1590px;height:2px;background:#333333;border-radius:0px;"></div>
<div class="b" style="left:926px;top:1043.8px;width:1590px;height:2px;background:#333333;border-radius:0px;"></div>
<div class="b" style="left:926px;top:1105.7px;width:1590px;height:2px;background:#333333;border-radius:0px;"></div>
<div class="b" style="left:926px;top:1167.9px;width:1590px;height:2px;background:#333333;border-radius:0px;"></div>
<div class="b" style="left:926px;top:1229.7px;width:1590px;height:2px;background:#333333;border-radius:0px;"></div>
<div class="b" style="left:955.5px;top:946.0px;width:11px;height:11px;border-radius:50%;background:#2ccf8f"></div>
<div class="t" style="top:932.2px;font-family:'Liberation Mono', monospace;font-size:24px;color:#b0b0b0;left:977px;transform:scaleX(0.9167);transform-origin:left 0;">Completed</div>
<div class="t" style="top:932.2px;font-family:'Liberation Mono', monospace;font-size:24px;color:#9a9a9a;left:1177px;transform:scaleX(0.9167);transform-origin:left 0;">GAL-0002</div>
<div class="t" style="top:932.2px;font-family:'Liberation Mono', monospace;font-size:24px;color:#dadada;left:1339.5px;transform:scaleX(0.9167);transform-origin:left 0;">Sync Meta ad stats to Google Sheet</div>
<div class="t" style="top:932.2px;font-family:'Liberation Mono', monospace;font-size:24px;color:#c4c4c4;left:1642px;width:700px;text-align:right;transform:scaleX(0.9167);transform-origin:right 0;">ads</div>
<div class="b" style="left:2261.5000000000005px;top:937.8px;width:27.4px;height:27.4px;border-radius:50%;background:linear-gradient(118deg,#c54bf3 0%,#8f5bf6 38%,#c14cf2 55%,#ee2ef0 75%,#e83af0 100%)"></div>
<div class="t" style="top:932.2px;font-family:'Liberation Mono', monospace;font-size:24px;color:#777777;left:1785px;width:700px;text-align:right;transform:scaleX(0.9167);transform-origin:right 0;">37m ago</div>
<div class="b" style="left:955.5px;top:1008.1px;width:11px;height:11px;border-radius:50%;background:#7cc8f5"></div>
<div class="t" style="top:994.3000000000001px;font-family:'Liberation Mono', monospace;font-size:24px;color:#b0b0b0;left:977px;transform:scaleX(0.9167);transform-origin:left 0;">Moved</div>
<div class="t" style="top:994.3000000000001px;font-family:'Liberation Mono', monospace;font-size:24px;color:#9a9a9a;left:1177px;transform:scaleX(0.9167);transform-origin:left 0;">GAL-0001</div>
<div class="t" style="top:994.3000000000001px;font-family:'Liberation Mono', monospace;font-size:24px;color:#dadada;left:1339.5px;transform:scaleX(0.9167);transform-origin:left 0;">Respond to customer support emails   In Progress</div>
<svg class="b" style="left:1802.5px;top:1003.1px;" width="14" height="20" viewBox="0 0 14 20" fill="none"><path d="M1.5 11 L12 11 M7.5 6.3 L12.2 11 L7.5 15.7" stroke="#d0d0d0" stroke-width="1.8" stroke-linecap="round" stroke-linejoin="round"/></svg>
<div class="t" style="top:994.3000000000001px;font-family:'Liberation Mono', monospace;font-size:24px;color:#c4c4c4;left:1642px;width:700px;text-align:right;transform:scaleX(0.9167);transform-origin:right 0;">support</div>
<div class="b" style="left:2208.7000000000003px;top:999.9px;width:27.4px;height:27.4px;border-radius:50%;background:linear-gradient(125deg,#d948ee 0%,#d946ef 38%,#f24a8a 55%,#f43f5e 70%,#f0436e 100%)"></div>
<div class="t" style="top:994.3000000000001px;font-family:'Liberation Mono', monospace;font-size:24px;color:#777777;left:1785px;width:700px;text-align:right;transform:scaleX(0.9167);transform-origin:right 0;">40m ago</div>
<div class="b" style="left:955.5px;top:1070.3px;width:11px;height:11px;border-radius:50%;background:#2ccf8f"></div>
<div class="t" style="top:1056.5px;font-family:'Liberation Mono', monospace;font-size:24px;color:#b0b0b0;left:977px;transform:scaleX(0.9167);transform-origin:left 0;">Completed</div>
<div class="t" style="top:1056.5px;font-family:'Liberation Mono', monospace;font-size:24px;color:#9a9a9a;left:1177px;transform:scaleX(0.9167);transform-origin:left 0;">GAL-0009</div>
<div class="t" style="top:1056.5px;font-family:'Liberation Mono', monospace;font-size:24px;color:#dadada;left:1339.5px;transform:scaleX(0.9167);transform-origin:left 0;">Generate lead gen post for Twitter</div>
<div class="t" style="top:1056.5px;font-family:'Liberation Mono', monospace;font-size:24px;color:#c4c4c4;left:1642px;width:700px;text-align:right;transform:scaleX(0.9167);transform-origin:right 0;">scout</div>
<div class="b" style="left:2235.1000000000004px;top:1062.1px;width:27.4px;height:27.4px;border-radius:50%;background:linear-gradient(160deg,#f4405e 0%,#f04075 20%,#dc46e0 48%,#d646ef 70%,#dc45ee 100%)"></div>
<div class="t" style="top:1056.5px;font-family:'Liberation Mono', monospace;font-size:24px;color:#777777;left:1785px;width:700px;text-align:right;transform:scaleX(0.9167);transform-origin:right 0;">45m ago</div>
<div class="b" style="left:955.5px;top:1132.2px;width:11px;height:11px;border-radius:50%;background:#7cc8f5"></div>
<div class="t" style="top:1118.4px;font-family:'Liberation Mono', monospace;font-size:24px;color:#b0b0b0;left:977px;transform:scaleX(0.9167);transform-origin:left 0;">Created</div>
<div class="t" style="top:1118.4px;font-family:'Liberation Mono', monospace;font-size:24px;color:#9a9a9a;left:1177px;transform:scaleX(0.9167);transform-origin:left 0;">GAL-0004</div>
<div class="t" style="top:1118.4px;font-family:'Liberation Mono', monospace;font-size:24px;color:#dadada;left:1339.5px;transform:scaleX(0.9167);transform-origin:left 0;">Create 5 UGC characters via RoasOS API</div>
<div class="t" style="top:1118.4px;font-family:'Liberation Mono', monospace;font-size:24px;color:#c4c4c4;left:1642px;width:700px;text-align:right;transform:scaleX(0.9167);transform-origin:right 0;">strategi…</div>
<div class="b" style="left:2182.3px;top:1124.0px;width:27.4px;height:27.4px;border-radius:50%;background:linear-gradient(118deg,#b153f5 0%,#ee30f0 28%,#e833ef 38%,#a35bf6 58%,#d845ef 80%,#dc45ee 100%)"></div>
<div class="t" style="top:1118.4px;font-family:'Liberation Mono', monospace;font-size:24px;color:#777777;left:1785px;width:700px;text-align:right;transform:scaleX(0.9167);transform-origin:right 0;">55m ago</div>
<div class="b" style="left:955.5px;top:1194.4px;width:11px;height:11px;border-radius:50%;background:#ef4444"></div>
<div class="t" style="top:1180.6000000000001px;font-family:'Liberation Mono', monospace;font-size:24px;color:#b0b0b0;left:977px;transform:scaleX(0.9167);transform-origin:left 0;">Failed</div>
<div class="t" style="top:1180.6000000000001px;font-family:'Liberation Mono', monospace;font-size:24px;color:#9a9a9a;left:1177px;transform:scaleX(0.9167);transform-origin:left 0;">GAL-0010</div>
<div class="t" style="top:1180.6000000000001px;font-family:'Liberation Mono', monospace;font-size:24px;color:#dadada;left:1339.5px;transform:scaleX(0.9167);transform-origin:left 0;">Scrape competitor videos</div>
<div class="t" style="top:1180.6000000000001px;font-family:'Liberation Mono', monospace;font-size:24px;color:#c4c4c4;left:1642px;width:700px;text-align:right;transform:scaleX(0.9167);transform-origin:right 0;">scout</div>
<div class="b" style="left:2235.1000000000004px;top:1186.2px;width:27.4px;height:27.4px;border-radius:50%;background:linear-gradient(160deg,#f4405e 0%,#f04075 20%,#dc46e0 48%,#d646ef 70%,#dc45ee 100%)"></div>
<div class="t" style="top:1180.6000000000001px;font-family:'Liberation Mono', monospace;font-size:24px;color:#777777;left:1785px;width:700px;text-align:right;transform:scaleX(0.9167);transform-origin:right 0;">1h ago</div>
<div class="t" style="top:1241.7px;font-family:'Liberation Mono', monospace;font-size:24px;color:#a0a0a0;left:1421px;width:600px;text-align:center;transform:scaleX(0.9167);transform-origin:center 0;">Show 3 more</div>
<div class="t" style="top:1323.7px;font-family:'Liberation Sans', sans-serif;font-size:22px;color:#7a7a7a;letter-spacing:0.5px;left:926px;transform:scaleX(0.92);transform-origin:0 0;">AGENTS</div>
<div class="b" style="left:926px;top:1374px;width:1590px;height:506px;background:#292929;border-radius:24px;"></div>
<div class="t" style="top:1387px;font-family:'Liberation Mono', monospace;font-size:22px;color:#767676;left:956px;">STATUS</div>
<div class="t" style="top:1387px;font-family:'Liberation Mono', monospace;font-size:22px;color:#767676;left:1178px;">NAME</div>
<div class="t" style="top:1387px;font-family:'Liberation Mono', monospace;font-size:22px;color:#767676;left:1499px;width:700px;text-align:right;">MODEL</div>
<div class="t" style="top:1387px;font-family:'Liberation Mono', monospace;font-size:22px;color:#767676;left:1641px;width:700px;text-align:right;">COST</div>
<div class="t" style="top:1387px;font-family:'Liberation Mono', monospace;font-size:22px;color:#767676;left:1784px;width:700px;text-align:right;">TASKS</div>
<div class="b" style="left:926px;top:1434px;width:1590px;height:2px;background:#333333;border-radius:0px;"></div>
<div class="b" style="left:926px;top:1498px;width:1590px;height:2px;background:#333333;border-radius:0px;"></div>
<div class="b" style="left:926px;top:1562px;width:1590px;height:2px;background:#333333;border-radius:0px;"></div>
<div class="b" style="left:926px;top:1626px;width:1590px;height:2px;background:#333333;border-radius:0px;"></div>
<div class="b" style="left:926px;top:1690px;width:1590px;height:2px;background:#333333;border-radius:0px;"></div>
<div class="b" style="left:926px;top:1754px;width:1590px;height:2px;background:#333333;border-radius:0px;"></div>
<div class="b" style="left:926px;top:1818px;width:1590px;height:2px;background:#333333;border-radius:0px;"></div>
<div class="b" style="left:955.5px;top:1461.5px;width:11px;height:11px;border-radius:50%;background:#2ccf8f"></div>
<div class="t" style="top:1447.7px;font-family:'Liberation Mono', monospace;font-size:24px;color:#b0b0b0;left:977px;transform:scaleX(0.9167);transform-origin:left 0;">Active</div>
<div class="b" style="left:1178.5px;top:1451.5px;width:31px;height:31px;border-radius:50%;background:linear-gradient(118deg,#b153f5 0%,#ee30f0 28%,#e833ef 38%,#a35bf6 58%,#d845ef 80%,#dc45ee 100%)"></div>
<div class="t" style="top:1447.7px;font-family:'Liberation Mono', monospace;font-size:24px;color:#d2d2d2;left:1224.5px;transform:scaleX(0.9167);transform-origin:left 0;">strategist</div>
<div class="b" style="left:1368.5px;top:1452px;width:85px;height:30px;background:#323a40;border-radius:10px;"></div>
<div class="t" style="top:1449px;font-family:'Liberation Mono', monospace;font-size:22px;color:#7dd3fc;left:1111px;width:600px;text-align:center;-webkit-text-stroke:0.2px #7dd3fc;">ADMIN</div>
<div class="t" style="top:1447.7px;font-family:'Liberation Mono', monospace;font-size:24px;color:#a3a3a3;left:1500px;width:700px;text-align:right;transform:scaleX(0.9167);transform-origin:right 0;">Opus 4.6</div>
<div class="t" style="top:1447.7px;font-family:'Liberation Mono', monospace;font-size:24px;color:#bfbfbf;left:1642px;width:700px;text-align:right;transform:scaleX(0.9167);transform-origin:right 0;">$13.22</div>
<div class="t" style="top:1447.7px;font-family:'Liberation Mono', monospace;font-size:24px;color:#8a8a8a;left:1785px;width:700px;text-align:right;transform:scaleX(0.9167);transform-origin:right 0;">0</div>
<div class="b" style="left:955.5px;top:1525.5px;width:11px;height:11px;border-radius:50%;background:#2ccf8f"></div>
<div class="t" style="top:1511.7px;font-family:'Liberation Mono', monospace;font-size:24px;color:#b0b0b0;left:977px;transform:scaleX(0.9167);transform-origin:left 0;">Active</div>
<div class="b" style="left:1178.5px;top:1515.5px;width:31px;height:31px;border-radius:50%;background:linear-gradient(62deg,#8b5cf6 0%,#8d5cf6 30%,#c94df2 52%,#ee2af0 78%,#f02cf0 100%)"></div>
<div class="t" style="top:1511.7px;font-family:'Liberation Mono', monospace;font-size:24px;color:#d2d2d2;left:1224.5px;transform:scaleX(0.9167);transform-origin:left 0;">copywriter</div>
<div class="t" style="top:1511.7px;font-family:'Liberation Mono', monospace;font-size:24px;color:#a3a3a3;left:1500px;width:700px;text-align:right;transform:scaleX(0.9167);transform-origin:right 0;">Sonnet 4.6</div>
<div class="t" style="top:1511.7px;font-family:'Liberation Mono', monospace;font-size:24px;color:#bfbfbf;left:1642px;width:700px;text-align:right;transform:scaleX(0.9167);transform-origin:right 0;">$6.71</div>
<div class="t" style="top:1511.7px;font-family:'Liberation Mono', monospace;font-size:24px;color:#8a8a8a;left:1785px;width:700px;text-align:right;transform:scaleX(0.9167);transform-origin:right 0;">1</div>
<div class="b" style="left:955.5px;top:1589.5px;width:11px;height:11px;border-radius:50%;background:#2ccf8f"></div>
<div class="t" style="top:1575.7px;font-family:'Liberation Mono', monospace;font-size:24px;color:#b0b0b0;left:977px;transform:scaleX(0.9167);transform-origin:left 0;">Active</div>
<div class="b" style="left:1178.5px;top:1579.5px;width:31px;height:31px;border-radius:50%;background:linear-gradient(160deg,#f4405e 0%,#f04075 20%,#dc46e0 48%,#d646ef 70%,#dc45ee 100%)"></div>
<div class="t" style="top:1575.7px;font-family:'Liberation Mono', monospace;font-size:24px;color:#d2d2d2;left:1224.5px;transform:scaleX(0.9167);transform-origin:left 0;">scout</div>
<div class="t" style="top:1575.7px;font-family:'Liberation Mono', monospace;font-size:24px;color:#a3a3a3;left:1500px;width:700px;text-align:right;transform:scaleX(0.9167);transform-origin:right 0;">Kimi K2.5</div>
<div class="t" style="top:1575.7px;font-family:'Liberation Mono', monospace;font-size:24px;color:#bfbfbf;left:1642px;width:700px;text-align:right;transform:scaleX(0.9167);transform-origin:right 0;">$1.10</div>
<div class="t" style="top:1575.7px;font-family:'Liberation Mono', monospace;font-size:24px;color:#8a8a8a;left:1785px;width:700px;text-align:right;transform:scaleX(0.9167);transform-origin:right 0;">3</div>
<div class="b" style="left:955.5px;top:1653.5px;width:11px;height:11px;border-radius:50%;background:#2ccf8f"></div>
<div class="t" style="top:1639.7px;font-family:'Liberation Mono', monospace;font-size:24px;color:#b0b0b0;left:977px;transform:scaleX(0.9167);transform-origin:left 0;">Active</div>
<div class="b" style="left:1178.5px;top:1643.5px;width:31px;height:31px;border-radius:50%;background:linear-gradient(118deg,#c54bf3 0%,#8f5bf6 38%,#c14cf2 55%,#ee2ef0 75%,#e83af0 100%)"></div>
<div class="t" style="top:1639.7px;font-family:'Liberation Mono', monospace;font-size:24px;color:#d2d2d2;left:1224.5px;transform:scaleX(0.9167);transform-origin:left 0;">ads</div>
<div class="t" style="top:1639.7px;font-family:'Liberation Mono', monospace;font-size:24px;color:#a3a3a3;left:1500px;width:700px;text-align:right;transform:scaleX(0.9167);transform-origin:right 0;">Sonnet 4.6</div>
<div class="t" style="top:1639.7px;font-family:'Liberation Mono', monospace;font-size:24px;color:#bfbfbf;left:1642px;width:700px;text-align:right;transform:scaleX(0.9167);transform-origin:right 0;">$4.17</div>
<div class="t" style="top:1639.7px;font-family:'Liberation Mono', monospace;font-size:24px;color:#8a8a8a;left:1785px;width:700px;text-align:right;transform:scaleX(0.9167);transform-origin:right 0;">1</div>
<div class="b" style="left:955.5px;top:1717.5px;width:11px;height:11px;border-radius:50%;background:#f59e0b"></div>
<div class="t" style="top:1703.7px;font-family:'Liberation Mono', monospace;font-size:24px;color:#b0b0b0;left:977px;transform:scaleX(0.9167);transform-origin:left 0;">Paused</div>
<div class="b" style="left:1178.5px;top:1707.5px;width:31px;height:31px;border-radius:50%;background:linear-gradient(62deg,#f43f5e 0%,#f24170 25%,#d946ef 58%,#d646ef 100%)"></div>
<div class="t" style="top:1703.7px;font-family:'Liberation Mono', monospace;font-size:24px;color:#d2d2d2;left:1224.5px;transform:scaleX(0.9167);transform-origin:left 0;">outreach</div>
<div class="t" style="top:1703.7px;font-family:'Liberation Mono', monospace;font-size:24px;color:#a3a3a3;left:1500px;width:700px;text-align:right;transform:scaleX(0.9167);transform-origin:right 0;">MiniMax M2.5</div>
<div class="t" style="top:1703.7px;font-family:'Liberation Mono', monospace;font-size:24px;color:#bfbfbf;left:1642px;width:700px;text-align:right;transform:scaleX(0.9167);transform-origin:right 0;">$0.34</div>
<div class="t" style="top:1703.7px;font-family:'Liberation Mono', monospace;font-size:24px;color:#8a8a8a;left:1785px;width:700px;text-align:right;transform:scaleX(0.9167);transform-origin:right 0;">1</div>
<div class="b" style="left:955.5px;top:1781.5px;width:11px;height:11px;border-radius:50%;background:#2ccf8f"></div>
<div class="t" style="top:1767.7px;font-family:'Liberation Mono', monospace;font-size:24px;color:#b0b0b0;left:977px;transform:scaleX(0.9167);transform-origin:left 0;">Active</div>
<div class="b" style="left:1178.5px;top:1771.5px;width:31px;height:31px;border-radius:50%;background:linear-gradient(168deg,#f22af0 0%,#e036f0 30%,#a857f5 62%,#8b5cf6 100%)"></div>
<div class="t" style="top:1767.7px;font-family:'Liberation Mono', monospace;font-size:24px;color:#d2d2d2;left:1224.5px;transform:scaleX(0.9167);transform-origin:left 0;">designer</div>
<div class="t" style="top:1767.7px;font-family:'Liberation Mono', monospace;font-size:24px;color:#a3a3a3;left:1500px;width:700px;text-align:right;transform:scaleX(0.9167);transform-origin:right 0;">Sonnet 4.6</div>
<div class="t" style="top:1767.7px;font-family:'Liberation Mono', monospace;font-size:24px;color:#bfbfbf;left:1642px;width:700px;text-align:right;transform:scaleX(0.9167);transform-origin:right 0;">$3.21</div>
<div class="t" style="top:1767.7px;font-family:'Liberation Mono', monospace;font-size:24px;color:#8a8a8a;left:1785px;width:700px;text-align:right;transform:scaleX(0.9167);transform-origin:right 0;">0</div>
<div class="t" style="top:1828.7px;font-family:'Liberation Mono', monospace;font-size:24px;color:#a0a0a0;left:1421px;width:600px;text-align:center;transform:scaleX(0.9167);transform-origin:center 0;">Show 3 more</div>
<div class="t" style="top:1913.8px;font-family:'Liberation Sans', sans-serif;font-size:22px;color:#7a7a7a;letter-spacing:0.5px;left:926px;transform:scaleX(0.92);transform-origin:0 0;">TASKS</div>
<div class="b" style="left:926px;top:1962.5px;width:1590px;height:400px;background:#292929;border-radius:24px;"></div>
<div class="t" style="top:1975.5px;font-family:'Liberation Mono', monospace;font-size:22px;color:#767676;left:956px;">STATUS</div>
<div class="t" style="top:1975.5px;font-family:'Liberation Mono', monospace;font-size:22px;color:#767676;left:1178px;">TASK</div>
<div class="t" style="top:1975.5px;font-family:'Liberation Mono', monospace;font-size:22px;color:#767676;left:1340.5px;">TITLE</div>
<div class="t" style="top:1975.5px;font-family:'Liberation Mono', monospace;font-size:22px;color:#767676;left:1499px;width:700px;text-align:right;">AGENT</div>
<div class="t" style="top:1975.5px;font-family:'Liberation Mono', monospace;font-size:22px;color:#767676;left:1641px;width:700px;text-align:right;">COST</div>
<div class="t" style="top:1975.5px;font-family:'Liberation Mono', monospace;font-size:22px;color:#767676;left:1784px;width:700px;text-align:right;">CREATED</div>
<div class="b" style="left:926px;top:2022.5px;width:1590px;height:2px;background:#333333;border-radius:0px;"></div>
<div class="b" style="left:926px;top:2092.5px;width:1590px;height:2px;background:#333333;border-radius:0px;"></div>
<div class="b" style="left:955.5px;top:2051.4px;width:11px;height:11px;border-radius:50%;background:#7cc8f5"></div>
<div class="t" style="top:2038.4px;font-family:'Liberation Mono', monospace;font-size:26px;color:#b0b0b0;left:978px;">In Progress</div>
<div class="t" style="top:2037.6px;font-family:'Liberation Mono', monospace;font-size:24px;color:#9a9a9a;left:1177px;transform:scaleX(0.9167);transform-origin:left 0;">GAL-0001</div>
<div class="t" style="top:2037.6px;font-family:'Liberation Mono', monospace;font-size:24px;color:#dadada;left:1339.5px;transform:scaleX(0.9167);transform-origin:left 0;">Respond to customer support emails</div>
<div class="t" style="top:2037.6px;font-family:'Liberation Mono', monospace;font-size:24px;color:#c4c4c4;left:1500px;width:700px;text-align:right;transform:scaleX(0.9167);transform-origin:right 0;">support</div>
<div class="b" style="left:2066.7000000000003px;top:2043.2px;width:27.4px;height:27.4px;border-radius:50%;background:linear-gradient(125deg,#d948ee 0%,#d946ef 38%,#f24a8a 55%,#f43f5e 70%,#f0436e 100%)"></div>
<div class="t" style="top:2037.6px;font-family:'Liberation Mono', monospace;font-size:24px;color:#bfbfbf;left:1642px;width:700px;text-align:right;transform:scaleX(0.9167);transform-origin:right 0;">$0.62</div>
<div class="t" style="top:2037.6px;font-family:'Liberation Mono', monospace;font-size:24px;color:#777777;left:1785px;width:700px;text-align:right;transform:scaleX(0.9167);transform-origin:right 0;">1h ago</div>
<div class="b" style="left:955.5px;top:2122.0px;width:11px;height:11px;border-radius:50%;background:#7cc8f5"></div>
<div class="t" style="top:2109px;font-family:'Liberation Mono', monospace;font-size:26px;color:#b0b0b0;left:978px;">In Progress</div>
<div class="t" style="top:2108.2px;font-family:'Liberation Mono', monospace;font-size:24px;color:#9a9a9a;left:1177px;transform:scaleX(0.9167);transform-origin:left 0;">GAL-0003</div>
<div class="t" style="top:2108.2px;font-family:'Liberation Mono', monospace;font-size:24px;color:#dadada;left:1339.5px;transform:scaleX(0.9167);transform-origin:left 0;">Review landing page copy for conversion</div>
<div class="t" style="top:2108.2px;font-family:'Liberation Mono', monospace;font-size:24px;color:#c4c4c4;left:1500px;width:700px;text-align:right;transform:scaleX(0.9167);transform-origin:right 0;">cmo</div>
<div class="b" style="left:2119.5000000000005px;top:2113.8px;width:27.4px;height:27.4px;border-radius:50%;background:linear-gradient(215deg,#12a5e8 0%,#1ca2e6 24%,#d04a86 46%,#f43f5e 62%,#f43f6a 78%,#ea3ac0 100%)"></div>
<div class="t" style="top:2108.2px;font-family:'Liberation Mono', monospace;font-size:24px;color:#bfbfbf;left:1642px;width:700px;text-align:right;transform:scaleX(0.9167);transform-origin:right 0;">$0.91</div>
<div class="t" style="top:2108.2px;font-family:'Liberation Mono', monospace;font-size:24px;color:#777777;left:1785px;width:700px;text-align:right;transform:scaleX(0.9167);transform-origin:right 0;">1h ago</div>
</body></html>
